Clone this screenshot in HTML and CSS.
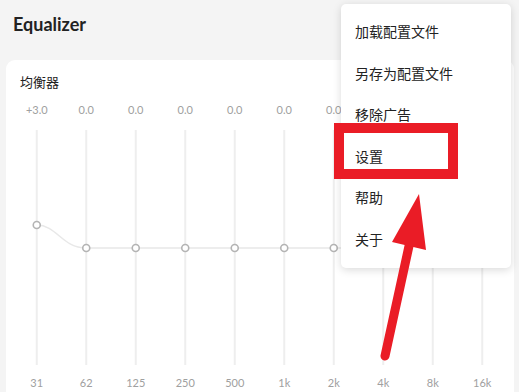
FILE: index.html
```html
<!DOCTYPE html>
<html lang="zh-CN">
<head>
    <meta charset="UTF-8">
    <meta name="viewport" content="width=device-width, initial-scale=1.0">
    <title>Equalizer</title>
    <link rel="stylesheet" href="styles.css">
</head>
<body>
    <h1 class="page-title">Equalizer</h1>

    <div class="card">
        <h2 class="card-title">均衡器</h2>

        <div class="band-row values">
            <span>+3.0</span><span>0.0</span><span>0.0</span><span>0.0</span><span>0.0</span>
            <span>0.0</span><span>0.0</span><span>0.0</span><span>0.0</span><span>0.0</span>
        </div>

        <svg class="chart" width="495" height="235" viewBox="0 0 495 235">
            <g class="tracks">
                <line x1="24.75" y1="0" x2="24.75" y2="235"/>
                <line x1="74.25" y1="0" x2="74.25" y2="235"/>
                <line x1="123.75" y1="0" x2="123.75" y2="235"/>
                <line x1="173.25" y1="0" x2="173.25" y2="235"/>
                <line x1="222.75" y1="0" x2="222.75" y2="235"/>
                <line x1="272.25" y1="0" x2="272.25" y2="235"/>
                <line x1="321.75" y1="0" x2="321.75" y2="235"/>
                <line x1="371.25" y1="0" x2="371.25" y2="235"/>
                <line x1="420.75" y1="0" x2="420.75" y2="235"/>
                <line x1="470.25" y1="0" x2="470.25" y2="235"/>
            </g>
            <path class="curve" d="M24.75 95 C45 95, 50 118, 74.25 118 L470.25 118"/>
            <g class="handles">
                <circle cx="24.75" cy="95" r="3.5"/>
                <circle cx="74.25" cy="118" r="3.5"/>
                <circle cx="123.75" cy="118" r="3.5"/>
                <circle cx="173.25" cy="118" r="3.5"/>
                <circle cx="222.75" cy="118" r="3.5"/>
                <circle cx="272.25" cy="118" r="3.5"/>
                <circle cx="321.75" cy="118" r="3.5"/>
                <circle cx="371.25" cy="118" r="3.5"/>
                <circle cx="420.75" cy="118" r="3.5"/>
                <circle cx="470.25" cy="118" r="3.5"/>
            </g>
        </svg>

        <div class="band-row freqs">
            <span>31</span><span>62</span><span>125</span><span>250</span><span>500</span>
            <span>1k</span><span>2k</span><span>4k</span><span>8k</span><span>16k</span>
        </div>
    </div>

    <ul class="menu">
        <li>加载配置文件</li>
        <li>另存为配置文件</li>
        <li>移除广告</li>
        <li>设置</li>
        <li>帮助</li>
        <li>关于</li>
    </ul>

    <!-- annotation -->
    <div class="highlight"></div>
    <svg class="arrow" width="519" height="392" viewBox="0 0 519 392">
        <line x1="385" y1="356" x2="409" y2="246" stroke="#ea1c26" stroke-width="9" stroke-linecap="round"/>
        <polygon points="419,194 392,242 426,250" fill="#ea1c26"/>
    </svg>
</body>
</html>
```

FILE: styles.css
```css
body {
    margin: 0;
    padding: 0;
    background-color: #f4f4f4;
    color: #222;
    font-family: Lato, "Noto Sans CJK SC", sans-serif;
    height: 392px;
    overflow: hidden;
    position: relative;
}

.page-title {
    margin: 0;
    padding: 14px 13px 0;
    font-size: 18px;
    line-height: 20px;
    font-weight: 700;
    color: #222;
}

.card {
    margin: 26px 5px 0 6px;
    padding: 12px 7px 20px 6px;
    background: #fff;
    border-radius: 9px;
}

.card-title {
    margin: 0 0 10px 8px;
    font-family: "Noto Sans CJK SC", sans-serif;
    font-size: 13px;
    line-height: 20px;
    font-weight: 400;
    color: #222;
}

.band-row {
    display: grid;
    grid-template-columns: repeat(10, 49.5px);
    text-align: center;
    font-size: 11px;
    line-height: 16px;
    color: #a0a0a0;
}

.values {
    margin-bottom: 12px;
}

.freqs {
    margin-top: 10px;
}

.chart {
    display: block;
}

.tracks line {
    stroke: #eeeeee;
    stroke-width: 2;
}

.curve {
    fill: none;
    stroke: #e8e8e8;
    stroke-width: 1.5;
}

.handles circle {
    fill: #fff;
    stroke: #b4b4b4;
    stroke-width: 1.6;
}

.menu {
    position: absolute;
    top: 4px;
    left: 341px;
    width: 170px;
    margin: 0;
    padding: 7px 0;
    list-style: none;
    background: #fff;
    border-radius: 5px;
    box-shadow: 0 2px 8px rgba(0, 0, 0, 0.15);
}

    .menu li {
        height: 41.6px;
        line-height: 41.6px;
        padding-left: 14px;
        font-family: "Noto Sans CJK SC", sans-serif;
        font-size: 14px;
        color: #222;
    }

.highlight {
    position: absolute;
    top: 123px;
    left: 334px;
    width: 104px;
    height: 36px;
    border: 10px solid #ea1c26;
}

.arrow {
    position: absolute;
    top: 0;
    left: 0;
    pointer-events: none;
}
```
